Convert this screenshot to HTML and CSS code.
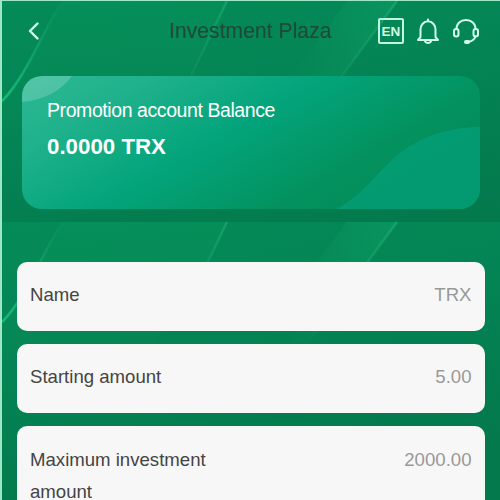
FILE: index.html
```html
<!DOCTYPE html>
<html lang="en">
<head>
<meta charset="UTF-8" />
<title>Investment Plaza</title>
<link rel="stylesheet" href="styles.css">
</head>
<body>
<div class="page">
	<!-- background -->
	<svg class="bg" viewBox="0 0 498 499">
		<defs>
			<linearGradient id="base" x1="0" y1="0" x2="0.35" y2="1">
				<stop offset="0" stop-color="#048b58" />
				<stop offset="0.4" stop-color="#048555" />
				<stop offset="1" stop-color="#03794c" />
			</linearGradient>
			<linearGradient id="ray" x1="0" y1="0" x2="1" y2="0">
				<stop offset="0.2" stop-color="#10a468" stop-opacity="0" />
				<stop offset="1" stop-color="#10a468" stop-opacity="0.55" />
			</linearGradient>
			<linearGradient id="glow" x1="0" y1="0" x2="0" y2="1">
				<stop offset="0" stop-color="#0a9a5e" stop-opacity="0.3" />
				<stop offset="1" stop-color="#0a9a5e" stop-opacity="0" />
			</linearGradient>
			<linearGradient id="edge" x1="0" y1="0" x2="0" y2="1">
				<stop offset="0" stop-color="#1fb178" stop-opacity="0.55" />
				<stop offset="1" stop-color="#1fb178" stop-opacity="0" />
			</linearGradient>
			<linearGradient id="edge2" x1="0" y1="0" x2="0" y2="1">
				<stop offset="0" stop-color="#1fb178" stop-opacity="0" />
				<stop offset="1" stop-color="#16c07c" stop-opacity="0.9" />
			</linearGradient>
			<g id="tile">
				<rect width="498" height="278" fill="url(#base)" />
				<path d="M60 0H225L186 75L130 150H0V100C22 75 40 30 60 0Z" fill="url(#glow)" />
				<path d="M345 0H395L306 121H255Z" fill="url(#ray)" opacity="0.8" />
				<path d="M60 0C40 32 24 76 0 100" fill="none" stroke="url(#edge2)" stroke-width="2.500" />
				<path d="M225 0L172 110" fill="none" stroke="url(#edge)" stroke-width="2.500" />
				<path d="M395 0L306 121" fill="none" stroke="url(#edge)" stroke-width="2.500" />
			</g>
		</defs>
		<use href="#tile" />
		<use href="#tile" y="221" />
	</svg>

	<!-- header -->
	<div class="header">
		<svg class="back" width="12" height="20" viewBox="0 0 12 20"><path d="M10.500 2.500L3 10L10.500 17.500" /></svg>
		<h1>Investment Plaza</h1>
		<div class="icons">
			<span class="lang">EN</span>
			<svg width="24" height="28" viewBox="0 0 24 28">
				<path d="M12 2.500V4M4.500 20V12.500C4.500 8 7.800 4.300 12 4.300S19.500 8 19.500 12.500V20L22 23H2Z" />
				<path d="M9 24.500C10.500 26.500 13.500 26.500 15 24.500" />
			</svg>
			<svg width="28" height="28" viewBox="0 0 28 28">
				<path d="M4.500 12C4.500 6.500 8.500 3 14 3S23.500 6.500 23.500 12" />
				<rect x="2" y="12" width="4.500" height="7.500" rx="2.200" />
				<rect x="21.500" y="12" width="4.500" height="7.500" rx="2.200" />
				<path d="M23.500 19.500C22.500 22.500 20 24.500 15.500 25" />
				<rect class="mic" x="12" y="23" width="6" height="4" rx="2" />
			</svg>
		</div>
	</div>

	<!-- balance -->
	<div class="balance">
		<svg class="deco" viewBox="0 0 458 133">
			<path d="M0 0H50C39 15 22 24 0 26Z" fill="#fff" fill-opacity="0.18" />
			<path d="M315 133C332 123 342 113 356 98C382 69 410 52 458 51V133Z" fill="#04a07a" fill-opacity="0.72" />
		</svg>
		<div class="label">Promotion account Balance</div>
		<div class="value">0.0000 TRX</div>
	</div>

	<!-- list -->
	<div class="list">
		<div class="item"><span class="name">Name</span><span class="num">TRX</span></div>
		<div class="item"><span class="name">Starting amount</span><span class="num">5.00</span></div>
		<div class="item"><span class="name">Maximum investment amount</span><span class="num">2000.00</span></div>
	</div>
</div>
</body>
</html>
```
FILE: styles.css
```css
* {
	padding: 0;
	margin: 0;
	box-sizing: border-box;
}
body {
	width: 500px;
	height: 500px;
	overflow: hidden;
	font-family: "Liberation Sans", Arial, sans-serif;
	background-color: #9ce8c4;
	padding: 1px 0 0 2px;
}
.page {
	position: relative;
	height: 499px;
	overflow: hidden;
	background-color: #047a4d;
}
.bg {
	position: absolute;
	top: 0;
	left: 0;
	width: 498px;
	height: 499px;
}

/* header */
.header {
	position: relative;
	display: flex;
	align-items: center;
	height: 60px;
	padding: 0 20px 0 25px;
}
.header svg {
	fill: none;
	stroke: #d2ffea;
	stroke-width: 2;
	stroke-linecap: round;
	stroke-linejoin: round;
}
.header .back {
	stroke-width: 2.4;
}
h1 {
	font-size: 21.2px;
	font-weight: normal;
	color: #1f4a38;
	margin-left: 130px;
}
.icons {
	display: flex;
	align-items: center;
	gap: 12px;
	margin-left: auto;
}
.lang {
	width: 26px;
	height: 26px;
	border: 2px solid #c2f7df;
	border-radius: 2px;
	color: #d2ffea;
	font-size: 13.5px;
	font-weight: bold;
	line-height: 23px;
	text-align: center;
}
.header .mic {
	fill: #d2ffea;
	stroke: none;
}

/* balance */
.balance {
	position: relative;
	width: 458px;
	height: 133px;
	margin: 15px 0 0 20px;
	padding: 22px 25px;
	border-radius: 20px;
	overflow: hidden;
	color: #fff;
	background: linear-gradient(150deg, #2db894 0%, #20b28c 18%, #03a47b 44%, #03925f 70%, #048755 100%);
}
.deco {
	position: absolute;
	top: 0;
	left: 0;
	width: 458px;
	height: 133px;
}
.label {
	position: relative;
	font-size: 19.5px;
	line-height: 24px;
	letter-spacing: -0.42px;
}
.value {
	position: relative;
	margin-top: 11px;
	font-size: 22.3px;
	line-height: 28px;
	font-weight: bold;
}

/* list */
.list {
	position: relative;
	display: flex;
	flex-direction: column;
	gap: 13.4px;
	padding: 52.6px 15px 0 14.5px;
}
.item {
	display: flex;
	justify-content: space-between;
	align-items: flex-start;
	min-height: 69px;
	padding: 17.5px 13.5px 17px;
	border-radius: 10px;
	background-color: #f7f7f7;
	font-size: 18.6px;
	line-height: 32px;
}
.name {
	width: 200px;
	color: #444;
}
.num {
	color: #999;
}
```
